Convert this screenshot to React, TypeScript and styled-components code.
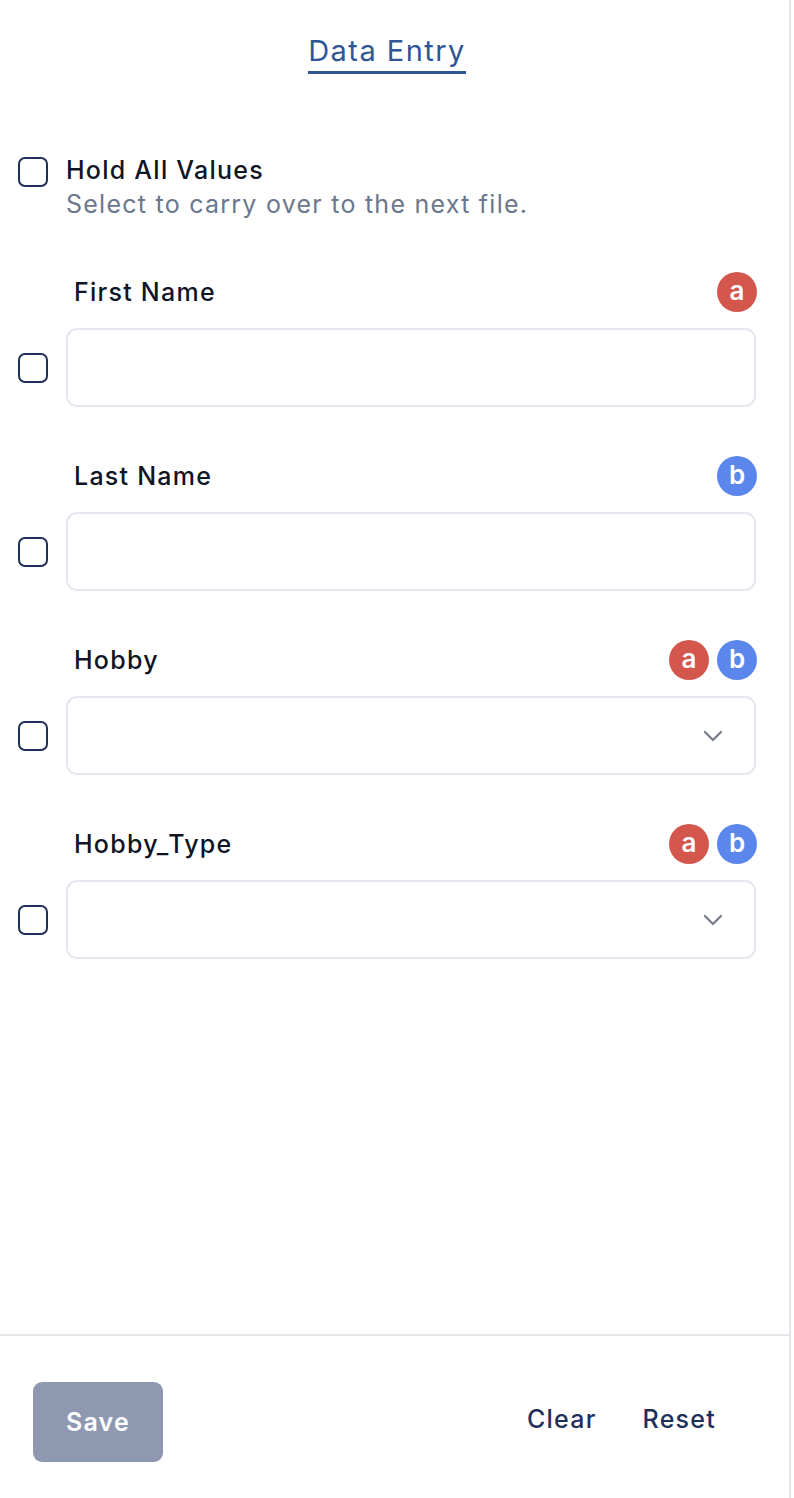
import React from "react";
import styled, { createGlobalStyle } from "styled-components";

const GlobalStyle = createGlobalStyle`
    html, body {
        margin: 0;
        padding: 0;
        background: #ffffff;
        font-family: Inter, "Noto Sans", sans-serif;
        letter-spacing: 0.078em;
    }
    button {
        font-family: inherit;
        letter-spacing: inherit;
        cursor: pointer;
    }
`;

const Panel = styled.div`
    width: 791px;
    height: 1498px;
    border-right: 2px solid #e6e7ec;
    display: flex;
    flex-direction: column;
    box-sizing: border-box;
`;

const Body = styled.div`
    flex: 1;
    padding: 31px 33px 0 18px;
`;

const TitleWrap = styled.div`
    display: flex;
    justify-content: center;
`;

const Title = styled.h1`
    margin: 0;
    font-size: 29px;
    font-weight: 400;
    letter-spacing: 0.05em;
    color: #2f5597;
    line-height: 40px;
    border-bottom: 3px solid #2f5597;
`;

const HoldRow = styled.label`
    display: flex;
    gap: 18px;
    margin-top: 83px;
    align-items: flex-start;
`;

const Box = styled.span`
    display: block;
    flex: none;
    width: 30px;
    height: 30px;
    box-sizing: border-box;
    border: 2px solid #1e2f5a;
    border-radius: 7px;
    background: #fff;
`;

const HoldText = styled.div`
    display: flex;
    flex-direction: column;
    margin-top: -4px;
`;

const HoldTitle = styled.span`
    font-size: 25px;
    line-height: 34px;
    font-weight: 500;
    color: #0f1524;
`;

const HoldHint = styled.span`
    font-size: 25px;
    line-height: 34px;
    color: #6b778c;
`;

const Fields = styled.div`
    margin-top: 49px;
    display: flex;
    flex-direction: column;
    gap: 47px;
`;

const Field = styled.div`
    display: grid;
    grid-template-columns: 30px 1fr;
    column-gap: 18px;
    row-gap: 14px;
    align-items: center;
`;

const LabelRow = styled.div`
    grid-column: 2;
    display: flex;
    align-items: center;
    justify-content: space-between;
    padding-left: 8px;
    height: 44px;
`;

const Label = styled.span`
    font-size: 25px;
    font-weight: 500;
    color: #0f1524;
`;

const Badges = styled.div`
    display: flex;
    gap: 8px;
    margin-right: -1px;
`;

const Badge = styled.span<{ $tone: "a" | "b" }>`
    width: 40px;
    height: 40px;
    border-radius: 50%;
    background: ${(p) => (p.$tone === "a" ? "#d3574c" : "#5b86eb")};
    color: #fff;
    font-size: 26px;
    font-weight: 600;
    letter-spacing: 0;
    display: flex;
    align-items: center;
    justify-content: center;
    line-height: 1;
    padding-bottom: 3px;
    box-sizing: border-box;
`;

const Input = styled.div`
    height: 79px;
    box-sizing: border-box;
    border: 2px solid #e4e7ee;
    border-radius: 11px;
    background: #fff;
    display: flex;
    align-items: center;
    justify-content: flex-end;
    padding-right: 31px;
`;

const Footer = styled.div`
    border-top: 2px solid #e6e7ec;
    height: 164px;
    box-sizing: border-box;
    display: flex;
    align-items: center;
    justify-content: space-between;
    padding: 0 73px 0 33px;
`;

const SaveButton = styled.button`
    width: 130px;
    height: 80px;
    border: none;
    border-radius: 9px;
    background: #8e99b1;
    color: #fff;
    font-size: 25px;
    font-weight: 600;
    margin-top: 10px;
    padding: 0;
`;

const Actions = styled.div`
    display: flex;
    gap: 46px;
    margin-top: 4px;
`;

const TextButton = styled.button`
    border: none;
    background: none;
    padding: 0;
    font-size: 25px;
    font-weight: 500;
    color: #1e2f5a;
`;

const Chevron = () => (
    <svg width="20" height="12" viewBox="0 0 20 12" fill="none" stroke="#737b88" strokeWidth="2.2" strokeLinecap="round" strokeLinejoin="round">
        <path d="M2 2l8 8 8-8" />
    </svg>
);

type FieldDef = { label: string; badges: ("a" | "b")[]; select?: boolean };

const fields: FieldDef[] = [
    { label: "First Name", badges: ["a"] },
    { label: "Last Name", badges: ["b"] },
    { label: "Hobby", badges: ["a", "b"], select: true },
    { label: "Hobby_Type", badges: ["a", "b"], select: true },
];

export default function App() {
    return (
        <>
            <GlobalStyle />
            <Panel>
                <Body>
                    <TitleWrap>
                        <Title>Data Entry</Title>
                    </TitleWrap>
                    <HoldRow>
                        <Box />
                        <HoldText>
                            <HoldTitle>Hold All Values</HoldTitle>
                            <HoldHint>Select to carry over to the next file.</HoldHint>
                        </HoldText>
                    </HoldRow>
                    <Fields>
                        {fields.map((f) => (
                            <Field key={f.label}>
                                <LabelRow>
                                    <Label>{f.label}</Label>
                                    <Badges>
                                        {f.badges.map((b) => (
                                            <Badge key={b} $tone={b}>{b}</Badge>
                                        ))}
                                    </Badges>
                                </LabelRow>
                                <Box />
                                <Input>{f.select && <Chevron />}</Input>
                            </Field>
                        ))}
                    </Fields>
                </Body>
                <Footer>
                    <SaveButton>Save</SaveButton>
                    <Actions>
                        <TextButton>Clear</TextButton>
                        <TextButton>Reset</TextButton>
                    </Actions>
                </Footer>
            </Panel>
        </>
    );
}
